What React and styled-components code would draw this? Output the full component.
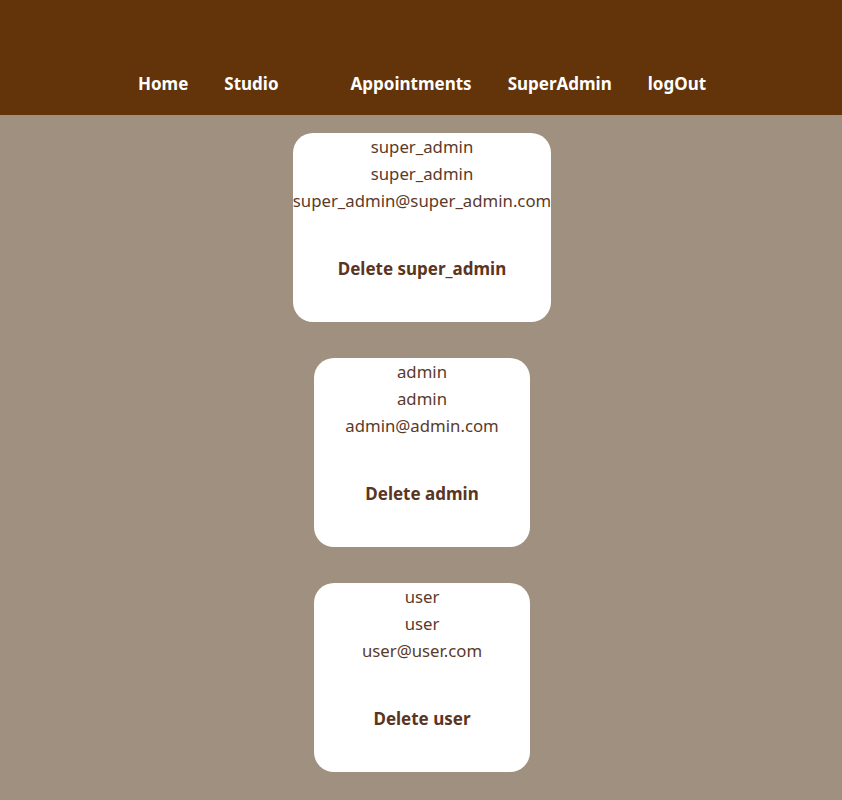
import React from "react";
import styled, { createGlobalStyle } from "styled-components";

const Global = createGlobalStyle`
  html, body { margin: 0; padding: 0; }
  body {
    background: #a09080;
    font-family: "Noto Sans", "Open Sans", sans-serif;
    min-height: 800px;
  }
`;

const Header = styled.header`
  height: 115px;
  background: #633409;
  display: flex;
  align-items: flex-end;
  justify-content: center;
  box-sizing: border-box;
  padding-bottom: 19px;
  padding-left: 2px;
`;

const Nav = styled.nav`
  display: flex;
  gap: 36px;
  align-items: center;
`;

const NavLink = styled.a`
  color: #ffffff;
  font-weight: 700;
  font-size: 17px;
  line-height: 24px;
  text-decoration: none;
  cursor: pointer;
`;

const List = styled.main`
  display: flex;
  flex-direction: column;
  align-items: center;
  gap: 36px;
  padding: 18px 0 28px 2px;
`;

const Card = styled.section`
  background: #ffffff;
  border-radius: 20px;
  min-width: 216px;
  height: 189px;
  box-sizing: border-box;
  display: flex;
  flex-direction: column;
  align-items: center;
`;

const Line = styled.div`
  color: #5b3a29;
  font-size: 16.75px;
  line-height: 27px;
  white-space: nowrap;
`;

const DeleteButton = styled.button`
  margin-top: 41px;
  background: transparent;
  border: none;
  color: #5a3522;
  font-family: inherit;
  font-weight: 700;
  font-size: 17px;
  line-height: 26px;
  cursor: pointer;
`;

const users = [
  { name: "super_admin", role: "super_admin", email: "super_admin@super_admin.com" },
  { name: "admin", role: "admin", email: "admin@admin.com" },
  { name: "user", role: "user", email: "user@user.com" },
];

export default function App() {
  return (
    <>
      <Global />
      <Header>
        <Nav>
          <NavLink>Home</NavLink>
          <NavLink>Studio</NavLink>
          <NavLink />
          <NavLink>Appointments</NavLink>
          <NavLink>SuperAdmin</NavLink>
          <NavLink>logOut</NavLink>
        </Nav>
      </Header>
      <List>
        {users.map((u) => (
          <Card key={u.email}>
            <Line>{u.name}</Line>
            <Line>{u.role}</Line>
            <Line>{u.email}</Line>
            <DeleteButton>Delete {u.name}</DeleteButton>
          </Card>
        ))}
      </List>
    </>
  );
}
